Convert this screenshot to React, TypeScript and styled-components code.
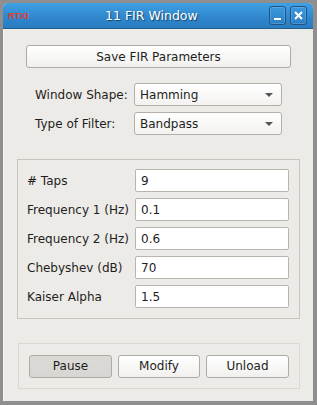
import React from "react";
import styled, { createGlobalStyle } from "styled-components";

const Global = createGlobalStyle`
  html, body { margin: 0; padding: 0; background: #8f8f8f; }
  body { font-family: "DejaVu Sans", sans-serif; font-size: 12px; color: #1e1e1e; }
`;

const Screen = styled.div`
  width: 317px;
  height: 405px;
  padding: 3px 4px 4px 3px;
  box-sizing: border-box;
`;

const Window = styled.div`
  width: 310px;
  height: 398px;
  display: flex;
  flex-direction: column;
  background: #edebe7;
  border-radius: 5px 5px 0 0;
  overflow: hidden;
`;

const TitleBar = styled.div`
  height: 25px;
  flex: none;
  display: flex;
  align-items: center;
  background: linear-gradient(#41a0e4, #2f86cc 60%, #2a7cbf);
  border-bottom: 1px solid #1f5f92;
  padding: 0 6px 0 5px;
`;

const Logo = styled.span`
  font-family: "Liberation Sans", sans-serif;
  font-weight: bold;
  font-size: 9px;
  color: #e8382c;
  width: 97px;
`;

const Title = styled.span`
  flex: 1;
  color: #ffffff;
  font-size: 12.5px;
  text-shadow: 1px 1px 1px #16446b;
  white-space: nowrap;
`;

const WinButtons = styled.div`
  display: flex;
  gap: 4px;
`;

const WinButton = styled.div`
  width: 17px;
  height: 19px;
  box-sizing: border-box;
  border: 1px solid #1c5486;
  border-radius: 3px;
  background: linear-gradient(#3a98de, #2b80c4);
  box-shadow: inset 0 0 0 1px rgba(255,255,255,0.15);
  display: flex;
  align-items: center;
  justify-content: center;
`;

const Content = styled.div`
  flex: 1;
  display: flex;
  flex-direction: column;
  padding: 16px 13px 12px 13px;
  border-left: 1px solid #f7f6f4;
`;

const PushButton = styled.button<{ $down?: boolean }>`
  font-family: "DejaVu Sans", sans-serif;
  font-size: 12px;
  color: #1e1e1e;
  height: 23px;
  box-sizing: border-box;
  border: 1px solid #aeaba6;
  border-radius: 3px;
  background: ${(p) => (p.$down ? "linear-gradient(#dcdad6, #d8d6d2)" : "linear-gradient(#ffffff, #f1f0ee)")};
  padding: 0;
  cursor: default;
`;

const SaveButton = styled(PushButton)`
  margin: 0 9px;
`;

const FormGrid = styled.div`
  margin: 15px 18px 0 18px;
  display: grid;
  grid-template-columns: 99px 1fr;
  row-gap: 6px;
  align-items: center;
`;

const Label = styled.span`
  font-size: 12px;
  white-space: nowrap;
`;

const Combo = styled.div`
  height: 23px;
  box-sizing: border-box;
  border: 1px solid #b3afa9;
  border-radius: 3px;
  background: linear-gradient(#ffffff, #f3f2f0);
  display: flex;
  align-items: center;
  justify-content: space-between;
  padding: 0 8px 0 5px;
`;

const Arrow = styled.span`
  width: 0;
  height: 0;
  border-left: 4px solid transparent;
  border-right: 4px solid transparent;
  border-top: 4px solid #555;
`;

const GroupBox = styled.div`
  margin-top: 24px;
  height: 160px;
  box-sizing: border-box;
  border: 1px solid #c8c5c0;
  padding: 9px 10px 0 9px;
  display: grid;
  grid-template-columns: 108px 1fr;
  grid-auto-rows: 23px;
  row-gap: 6px;
  align-items: center;
`;

const Field = styled.div`
  height: 23px;
  box-sizing: border-box;
  border: 1px solid #b8b4ae;
  border-radius: 2px;
  background: #ffffff;
  display: flex;
  align-items: center;
  padding-left: 5px;
  font-size: 12px;
`;

const ButtonBox = styled.div`
  margin-top: 24px;
  margin-left: 1px;
  height: 46px;
  box-sizing: border-box;
  border: 1px solid #dcd9d5;
  padding: 0 11px 0 10px;
  display: grid;
  grid-template-columns: 83px 82px 83px;
  column-gap: 6px;
  align-items: center;
`;

const params: [string, string][] = [
  ["# Taps", "9"],
  ["Frequency 1 (Hz)", "0.1"],
  ["Frequency 2 (Hz)", "0.6"],
  ["Chebyshev (dB)", "70"],
  ["Kaiser Alpha", "1.5"],
];

export default function App() {
  return (
    <>
      <Global />
      <Screen>
        <Window>
          <TitleBar>
            <Logo>RTXI</Logo>
            <Title>11 FIR Window</Title>
            <WinButtons>
              <WinButton>
                <svg width="9" height="11" viewBox="0 0 9 11">
                  <rect x="1" y="8" width="7" height="2" fill="#fff" />
                </svg>
              </WinButton>
              <WinButton>
                <svg width="9" height="9" viewBox="0 0 9 9">
                  <path d="M1 1 L8 8 M8 1 L1 8" stroke="#fff" strokeWidth="2" />
                </svg>
              </WinButton>
            </WinButtons>
          </TitleBar>
          <Content>
            <SaveButton>Save FIR Parameters</SaveButton>
            <FormGrid>
              <Label>Window Shape:</Label>
              <Combo>
                <span>Hamming</span>
                <Arrow />
              </Combo>
              <Label>Type of Filter:</Label>
              <Combo>
                <span>Bandpass</span>
                <Arrow />
              </Combo>
            </FormGrid>
            <GroupBox>
              {params.map(([l, v]) => (
                <React.Fragment key={l}>
                  <Label>{l}</Label>
                  <Field>{v}</Field>
                </React.Fragment>
              ))}
            </GroupBox>
            <ButtonBox>
              <PushButton $down>Pause</PushButton>
              <PushButton>Modify</PushButton>
              <PushButton>Unload</PushButton>
            </ButtonBox>
          </Content>
        </Window>
      </Screen>
    </>
  );
}
